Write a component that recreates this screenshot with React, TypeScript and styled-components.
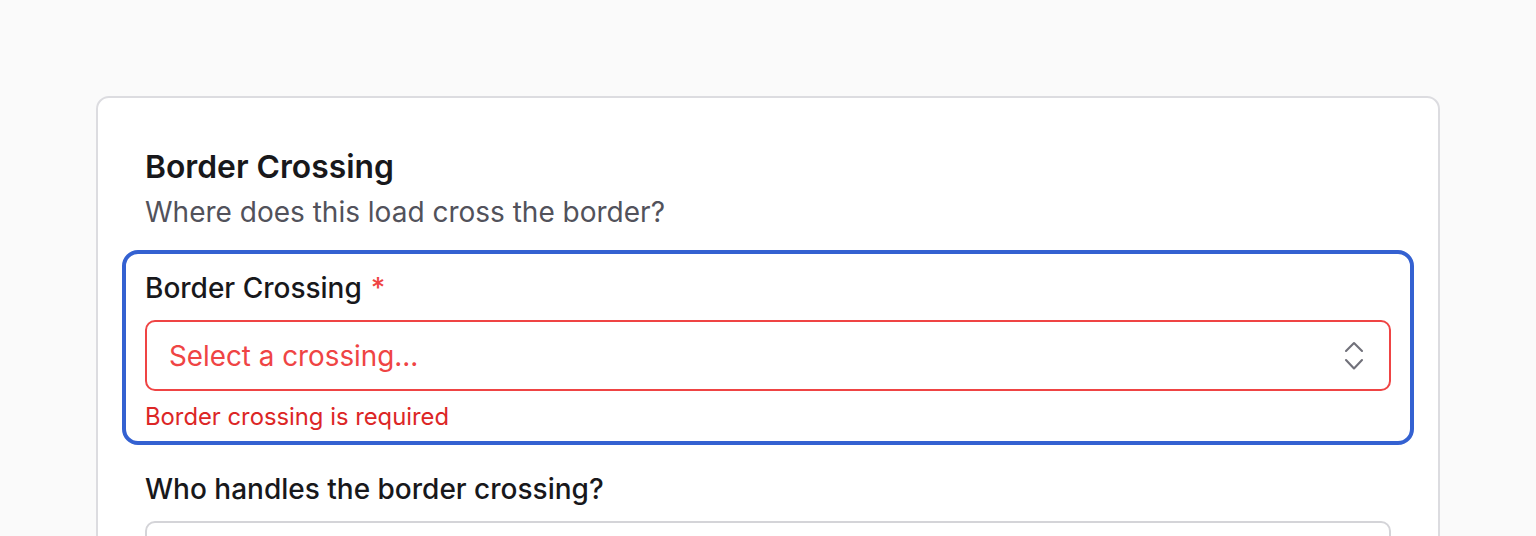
import React from "react";
import styled, { createGlobalStyle } from "styled-components";

const Global = createGlobalStyle`
  html, body { margin: 0; padding: 0; background: #fafafa; }
  body { font-family: Inter, "Noto Sans", "Liberation Sans", sans-serif; color: #18181b; -webkit-font-smoothing: antialiased; }
  * { box-sizing: border-box; }
`;

const Page = styled.div`
  padding: 96px 96px 0;
  height: 536px;
  overflow: hidden;
`;

const Card = styled.section`
  background: #ffffff;
  border: 2px solid #dcdce0;
  border-radius: 13px;
  padding: 44px 47px 60px;
`;

const Title = styled.h2`
  margin: 0;
  font-size: 31.8px;
  line-height: 49px;
  font-weight: 600;
  color: #18181b;
`;

const Subtitle = styled.p`
  margin: 0;
  font-size: 28px;
  line-height: 42px;
  color: #52525b;
`;

const FocusGroup = styled.div<{ $focused?: boolean }>`
  margin: ${(p) => (p.$focused ? "17px -23px 0" : "23px 0 0")};
  padding: ${(p) => (p.$focused ? "13px 19px 7px" : "0")};
  border: ${(p) => (p.$focused ? "4px solid #3461d1" : "none")};
  border-radius: 16px;
`;

const Label = styled.label`
  display: block;
  font-size: 28px;
  line-height: 42px;
  font-weight: 500;
  color: #18181b;
`;

const Required = styled.span`
  margin-left: 9px;
  color: #ef4444;
  font-weight: 500;
`;

const Select = styled.div<{ $invalid?: boolean }>`
  margin-top: 11px;
  height: 71px;
  display: flex;
  align-items: center;
  justify-content: space-between;
  padding: 0 25px 0 22px;
  border: 2px solid ${(p) => (p.$invalid ? "#ef4444" : "#d4d4d8")};
  border-radius: 10px;
  background: #ffffff;
`;

const Placeholder = styled.span<{ $invalid?: boolean }>`
  font-size: 27.8px;
  line-height: 42px;
  color: ${(p) => (p.$invalid ? "#ef4444" : "#71717a")};
`;

const ErrorText = styled.p`
  margin: 8px 0 0;
  font-size: 23.8px;
  line-height: 35px;
  color: #dc2626;
`;

const Chevrons = () => (
  <svg width="20" height="30" viewBox="0 0 20 30" fill="none" stroke="#71717a" strokeWidth="2.1" strokeLinecap="round" strokeLinejoin="round">
    <path d="M2 10 L10 2 L18 10" />
    <path d="M2 19 L10 27.5 L18 19" />
  </svg>
);

export default function App() {
  return (
    <>
      <Global />
      <Page>
        <Card>
          <Title>Border Crossing</Title>
          <Subtitle>Where does this load cross the border?</Subtitle>
          <FocusGroup $focused>
            <Label>
              Border Crossing<Required>*</Required>
            </Label>
            <Select $invalid>
              <Placeholder $invalid>Select a crossing...</Placeholder>
              <Chevrons />
            </Select>
            <ErrorText>Border crossing is required</ErrorText>
          </FocusGroup>
          <FocusGroup>
            <Label>Who handles the border crossing?</Label>
            <Select>
              <span />
              <Chevrons />
            </Select>
          </FocusGroup>
        </Card>
      </Page>
    </>
  );
}
